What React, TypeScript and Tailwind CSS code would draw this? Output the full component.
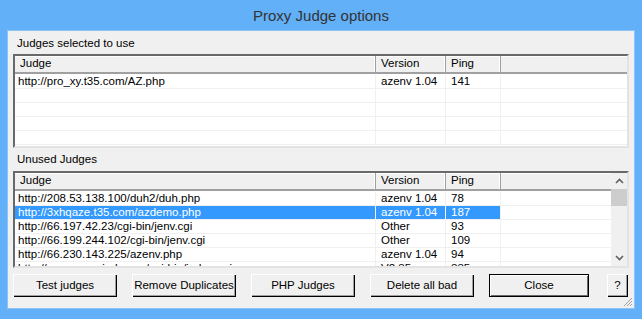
const font = { fontFamily: '"Liberation Sans", Arial, sans-serif' };

const selected = [{ judge: "http://pro_xy.t35.com/AZ.php", version: "azenv 1.04", ping: "141" }];

const unused = [
  { judge: "http://208.53.138.100/duh2/duh.php", version: "azenv 1.04", ping: "78" },
  { judge: "http://3xhqaze.t35.com/azdemo.php", version: "azenv 1.04", ping: "187", sel: true },
  { judge: "http://66.197.42.23/cgi-bin/jenv.cgi", version: "Other", ping: "93" },
  { judge: "http://66.199.244.102/cgi-bin/jenv.cgi", version: "Other", ping: "109" },
  { judge: "http://66.230.143.225/azenv.php", version: "azenv 1.04", ping: "94" },
  { judge: "http://www.proxyjudge.us/cgi-bin/judge.cgi", version: "V2.35", ping: "335" },
];

type Row = { judge: string; version: string; ping: string; sel?: boolean };

const HeaderCell = ({ label, w }: { label: string; w: string }) => (
  <div className={`${w} flex h-full items-center border-r border-r-[#a0a0a0] pl-[5px] shadow-[inset_-1px_0_0_#fff]`}>
    {label}
  </div>
);

const Header = () => (
  <div className="flex h-[18px] shrink-0 border-b-2 border-b-[#a0a0a0] bg-[#f0f0f0] shadow-[inset_0_1px_0_#fff]">
    <HeaderCell label="Judge" w="w-[361px]" />
    <HeaderCell label="Version" w="w-[70px]" />
    <HeaderCell label="Ping" w="w-[55px]" />
    <div className="flex-1" />
  </div>
);

const Rows = ({ rows, count }: { rows: Row[]; count: number }) => (
  <div className="flex flex-col pt-px">
    {Array.from({ length: count }).map((_, i) => {
      const r = rows[i];
      return (
        <div key={i} className="flex h-[14px] shrink-0 whitespace-nowrap border-b border-b-[#f0f0f0] leading-[13px]">
          <div className={`w-[361px] border-r border-r-[#f0f0f0] pl-[3px] ${r?.sel ? "bg-[#3399ff] text-white" : ""}`}>
            {r?.judge}
          </div>
          <div className={`w-[70px] border-r border-r-[#f0f0f0] pl-[5px] ${r?.sel ? "bg-[#3399ff] text-white border-r-white" : ""}`}>
            {r?.version}
          </div>
          <div className={`w-[55px] border-r border-r-[#f0f0f0] pl-[5px] ${r?.sel ? "bg-[#3399ff] text-white" : ""}`}>
            {r?.ping}
          </div>
          <div className="flex-1" />
        </div>
      );
    })}
  </div>
);

const Btn = ({ label, w, def }: { label: string; w: string; def?: boolean }) => (
  <div
    className={`${w} flex h-[23px] items-center justify-center whitespace-nowrap bg-[#f0f0f0] ${
      def
        ? "border border-[#000] shadow-[inset_1px_1px_0_#fff,inset_-1px_-1px_0_#696969]"
        : "shadow-[inset_1px_1px_0_#fff,inset_-1px_-1px_0_#000,inset_-2px_-2px_0_#a0a0a0]"
    }`}
  >
    {label}
  </div>
);

const App = () => {
  return (
    <div className="flex h-[319px] w-[642px] flex-col bg-[#62b0f7] text-[11.5px] text-black" style={font}>
      <div className="flex h-[30px] shrink-0 items-center justify-center pt-[2px] text-[15px] text-[#333]">
        Proxy Judge options
      </div>
      <div className="relative mx-[7px] mb-[10px] flex flex-1 flex-col border border-[#8cc4f5] bg-[#f0f0f0] px-[5px]">
        <div className="mt-[5px] h-[15px] pl-[4px] leading-[15px]">Judges selected to use</div>
        <div className="mt-[3px] flex h-[94px] flex-col overflow-hidden border-2 border-b-[#e3e3e3] border-r-[#e3e3e3] border-t-[#696969] border-l-[#696969] bg-white">
          <Header />
          <Rows rows={selected} count={5} />
        </div>
        <div className="mt-[4px] h-[15px] pl-[4px] leading-[15px]">Unused Judges</div>
        <div className="mt-[4px] flex h-[97px] overflow-hidden border-2 border-b-[#e3e3e3] border-r-[#e3e3e3] border-t-[#696969] border-l-[#696969] bg-white">
          <div className="flex flex-1 flex-col">
            <Header />
            <Rows rows={unused} count={6} />
          </div>
          <div className="flex w-[16px] shrink-0 flex-col bg-[#f0f0f0]">
            <div className="flex h-[16px] items-center justify-center">
              <svg width="9" height="6" viewBox="0 0 9 6">
                <path d="M1 5 L4.5 1.5 L8 5" stroke="#606060" strokeWidth="1.6" fill="none" />
              </svg>
            </div>
            <div className="h-[17px] bg-[#cdcdcd]" />
            <div className="flex-1" />
            <div className="flex h-[16px] items-center justify-center">
              <svg width="9" height="6" viewBox="0 0 9 6">
                <path d="M1 1 L4.5 4.5 L8 1" stroke="#606060" strokeWidth="1.6" fill="none" />
              </svg>
            </div>
          </div>
        </div>
        <div className="mt-[6px] flex items-center">
          <Btn label="Test judges" w="w-[104px]" />
          <div className="ml-[15px]"><Btn label="Remove Duplicates" w="w-[104px]" /></div>
          <div className="ml-[15px]"><Btn label="PHP Judges" w="w-[104px]" /></div>
          <div className="ml-[15px]"><Btn label="Delete all bad" w="w-[104px]" /></div>
          <div className="ml-[15px]"><Btn label="Close" w="w-[100px]" def /></div>
          <div className="ml-[18px]"><Btn label="?" w="w-[21px]" /></div>
        </div>
        <svg className="absolute bottom-[1px] right-[1px]" width="11" height="11" viewBox="0 0 11 11">
          <g stroke="#a0a0a0" strokeWidth="1">
            <path d="M10 2 L2 10" />
            <path d="M10 5 L5 10" />
            <path d="M10 8 L8 10" />
          </g>
        </svg>
      </div>
    </div>
  );
};

export default App;
